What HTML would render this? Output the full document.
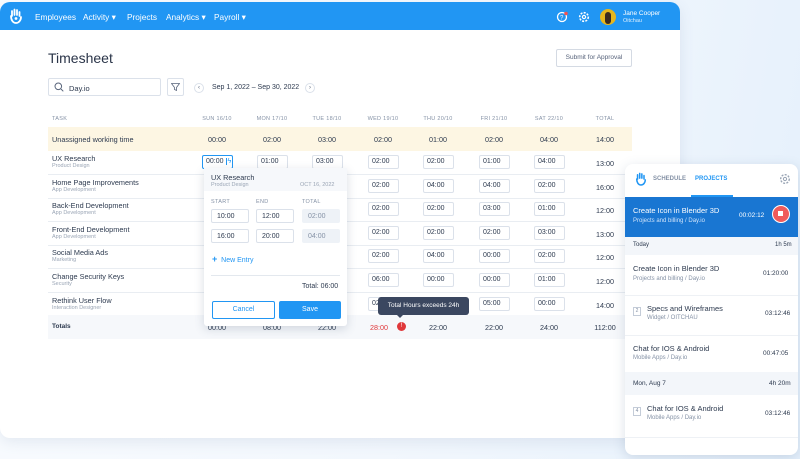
<!DOCTYPE html><html><head><style>
*{margin:0;padding:0;box-sizing:border-box}
body{width:800px;height:459px;overflow:hidden;position:relative;font-family:"Liberation Sans",sans-serif;background:linear-gradient(120deg,#fbfdff 0%,#f2f7fd 60%,#e6f1fc 100%);color:#2d3a4f}
.a{position:absolute}
.card{left:0;top:2px;width:680px;height:436px;background:#fff;border-radius:10px;box-shadow:0 4px 14px rgba(80,110,150,.12);overflow:hidden}
.nav{left:0;top:0;width:680px;height:28px;background:#2196f3;color:#fff;font-size:8.3px}
.nav span{position:absolute;top:10px}
.h{font-size:7px;color:#8592a6;letter-spacing:.3px}
.c{text-align:center;width:56px;margin-left:-28px;font-size:7.2px}
.inp{width:31px;height:14px;margin-left:-15px;border:1px solid #dbe1ea;border-radius:2px;font-size:7px;line-height:12px;padding-left:3px;background:#fff}
.line{left:48px;width:584px;height:1px;background:#e9edf2}
.t1{font-size:7.3px;color:#2d3a4f}.t2{font-size:5.5px;color:#9aa5b5}
.p .b{border:1px solid #dbe1ea;border-radius:2px;font-size:7px;padding:3px 5px;height:14px;line-height:7px}
.r .i{font-size:7.5px}.r .s{font-size:6px;color:#8592a6}
</style></head><body>
<div class="a" style="left:640px;top:0;width:200px;height:459px;background:linear-gradient(100deg,#eef5fd,#e3effb)"></div>
<div class="a card">
 <div class="a nav">
  <svg class="a" style="left:9px;top:6px" width="14" height="16" viewBox="0 0 14 16"><path d="M3 8V3M5.5 7V1.5M8 7V2M10.5 8V4M2 8c0 4 2 7 5 7s5-3 5-6" stroke="#fff" stroke-width="1.8" fill="none" stroke-linecap="round"/><circle cx="7" cy="10.5" r="1.4" fill="#fff"/></svg>
  <span style="left:35px">Employees</span><span style="left:83px">Activity ▾</span><span style="left:127px">Projects</span><span style="left:166px">Analytics ▾</span><span style="left:214px">Payroll ▾</span>
  <svg class="a" style="left:556px;top:9px" width="12" height="12"><circle cx="6" cy="6" r="4.5" stroke="#fff" stroke-width="1.3" fill="none"/><text x="4" y="8.5" font-size="6" fill="#fff">?</text><circle cx="10" cy="2.5" r="1.8" fill="#f05252"/></svg>
  <svg class="a" style="left:578px;top:9px" width="12" height="12"><circle cx="6" cy="6" r="4.3" stroke="#fff" stroke-width="1.6" stroke-dasharray="2 1.3" fill="none"/><circle cx="6" cy="6" r="1.6" stroke="#fff" stroke-width="1.2" fill="none"/></svg>
  <div class="a" style="left:600px;top:7px;width:16px;height:16px;border-radius:50%;background:#e7b61c"><div class="a" style="left:5px;top:3px;width:6px;height:12px;background:#3a2a20;border-radius:3px"></div></div>
  <span style="left:623px;top:8px;font-size:6.5px">Jane Cooper</span><span style="left:623px;top:16px;font-size:5.5px;opacity:.85">Oitchau</span>
 </div>
 <div class="a" style="left:48px;top:48px;font-size:14px;color:#2a3448">Timesheet</div>
 <div class="a" style="left:556px;top:47px;width:76px;height:18px;border:1px solid #d4dae3;border-radius:2px;font-size:6.5px;color:#56627a;text-align:center;line-height:16px">Submit for Approval</div>
 <div class="a" style="left:48px;top:76px;width:113px;height:18px;border:1px solid #dbe1ea;border-radius:2px;font-size:7.5px;padding:5px 0 0 20px">Day.io</div>
 <svg class="a" style="left:54px;top:80px" width="10" height="10"><circle cx="4.3" cy="4.3" r="3.3" stroke="#5a667c" fill="none"/><path d="M7 7l2.3 2.3" stroke="#5a667c"/></svg>
 <div class="a" style="left:167px;top:76px;width:17px;height:18px;border:1px solid #dbe1ea;border-radius:2px"></div>
 <svg class="a" style="left:171px;top:81px" width="9" height="8"><path d="M.5 .5h8L5.5 4.5v3l-2-1v-2z" stroke="#5a667c" fill="none" stroke-width=".8"/></svg>
 <div class="a" style="left:194px;top:81px;width:10px;height:10px;border:1px solid #dbe1ea;border-radius:50%;font-size:6px;text-align:center;line-height:8px;color:#5a667c">‹</div>
 <div class="a" style="left:212px;top:82px;font-size:7px">Sep 1, 2022 – Sep 30, 2022</div>
 <div class="a" style="left:305px;top:81px;width:10px;height:10px;border:1px solid #dbe1ea;border-radius:50%;font-size:6px;text-align:center;line-height:8px;color:#5a667c">›</div>
 <div class="a h" style="left:52px;top:114px;font-size:5.5px">TASK</div>
</div>
<div id="tb"></div>
<script>
var cols=[217,272,327,383,438,494,549,605],
hd=["SUN 16/10","MON 17/10","TUE 18/10","WED 19/10","THU 20/10","FRI 21/10","SAT 22/10","TOTAL"],
rows=[["UX Research","Product Design",["00:00","01:00","03:00","02:00","02:00","01:00","04:00","13:00"]],
["Home Page Improvements","App Development",["","","","02:00","04:00","04:00","02:00","16:00"]],
["Back-End Development","App Development",["","","","02:00","02:00","03:00","01:00","12:00"]],
["Front-End Development","App Development",["","","","02:00","02:00","02:00","03:00","13:00"]],
["Social Media Ads","Marketing",["","","","02:00","04:00","00:00","02:00","12:00"]],
["Change Security Keys","Security",["","","","06:00","00:00","00:00","01:00","12:00"]],
["Rethink User Flow","Interaction Designer",["","","","02:00","03:00","05:00","00:00","14:00"]]],
h='';
cols.forEach((x,i)=>h+=`<div class="a c h" style="left:${x}px;top:116px;font-size:5.5px">${hd[i]}</div>`);
h+=`<div class="a" style="left:48px;top:127px;width:584px;height:24px;background:#fdf6e3"></div><div class="a t1" style="left:52px;top:135px">Unassigned working time</div>`;
["00:00","02:00","03:00","02:00","01:00","02:00","04:00","14:00"].forEach((v,i)=>h+=`<div class="a c" style="left:${cols[i]}px;top:135px">${v}</div>`);
rows.forEach((r,k)=>{var y=151+k*23.6;
h+=`<div class="a line" style="top:${y+23}px"></div><div class="a t1" style="left:52px;top:${y+3}px">${r[0]}</div><div class="a t2" style="left:52px;top:${y+12}px">${r[1]}</div>`;
r[2].forEach((v,i)=>{if(!v)return;if(i==7)h+=`<div class="a c" style="left:${cols[i]}px;top:${y+8}px">${v}</div>`;else h+=`<div class="a inp" style="left:${cols[i]}px;top:${y+4}px;${k==0&&i==0?'border-color:#2196f3':''}">${v}${k==0&&i==0?'<span style="color:#2196f3;border-left:1px solid #2196f3;margin-left:2px;padding-left:1px">ϟ</span>':''}</div>`;});});
h+=`<div class="a" style="left:48px;top:315px;width:584px;height:24px;background:#f6f8fb"></div><div class="a t1" style="left:52px;top:323px;font-weight:bold;font-size:6.5px">Totals</div>`;
["00:00","08:00","22:00","28:00","22:00","22:00","24:00","112:00"].forEach((v,i)=>h+=`<div class="a c" style="left:${cols[i]}px;top:323px;${i==3?'color:#e0383b;margin-left:-32px':''}">${v}</div>`);
document.getElementById('tb').innerHTML=h;
</script>
<div class="a" style="left:397px;top:322px;width:9px;height:9px;border-radius:50%;background:#e0383b;color:#fff;font-size:6px;text-align:center;line-height:9px">!</div>
<div class="a" style="left:378px;top:297px;width:91px;height:18px;background:#3b4760;border-radius:3px;color:#fff;font-size:6.5px;text-align:center;line-height:18px">Total Hours exceeds 24h</div>
<div class="a" style="left:396px;top:314px;border:4px solid transparent;border-top-color:#3b4760"></div>
<div class="a p" style="left:204px;top:168px;width:143px;height:158px;background:#fff;border-radius:3px;box-shadow:0 3px 10px rgba(60,80,110,.2)">
 <div class="a" style="left:0;top:0;width:143px;height:23px;background:#f6f8fb"></div>
 <div class="a t1" style="left:7px;top:5px">UX Research</div><div class="a t2" style="left:7px;top:14px">Product Design</div><div class="a t2" style="left:96px;top:14px">OCT 16, 2022</div>
 <div class="a h" style="left:7px;top:31px;font-size:5.5px">START</div><div class="a h" style="left:52px;top:31px;font-size:5.5px">END</div><div class="a h" style="left:98px;top:31px;font-size:5.5px">TOTAL</div>
 <div class="a b" style="left:7px;top:41px;width:38px">10:00</div><div class="a b" style="left:52px;top:41px;width:38px">12:00</div><div class="a b" style="left:98px;top:41px;width:38px;background:#eef2f7;border-color:#eef2f7;color:#8592a6">02:00</div>
 <div class="a b" style="left:7px;top:61px;width:38px">16:00</div><div class="a b" style="left:52px;top:61px;width:38px">20:00</div><div class="a b" style="left:98px;top:61px;width:38px;background:#eef2f7;border-color:#eef2f7;color:#8592a6">04:00</div>
 <div class="a" style="left:8px;top:86px;font-size:7px;color:#2196f3"><b style="font-size:9px">+</b>&nbsp; New Entry</div>
 <div class="a" style="left:7px;top:107px;width:129px;height:1px;background:#e3e8ee"></div>
 <div class="a" style="left:98px;top:115px;font-size:7px">Total: 06:00</div>
 <div class="a" style="left:8px;top:133px;width:63px;height:18px;border:1px solid #2196f3;border-radius:2px;color:#2196f3;font-size:7px;text-align:center;line-height:16px">Cancel</div>
 <div class="a" style="left:75px;top:133px;width:62px;height:18px;background:#2196f3;border-radius:2px;color:#fff;font-size:7px;text-align:center;line-height:18px">Save</div>
</div>
<div class="a r" style="left:625px;top:164px;width:173px;height:291px;background:#fff;border-radius:8px;box-shadow:0 3px 12px rgba(60,90,130,.18);overflow:hidden">
 <svg class="a" style="left:10px;top:8px" width="12" height="14" viewBox="0 0 14 16"><path d="M3 8V3M5.5 7V1.5M8 7V2M10.5 8V4M2 8c0 4 2 7 5 7s5-3 5-6" stroke="#2196f3" stroke-width="1.8" fill="none" stroke-linecap="round"/></svg>
 <div class="a" style="left:28px;top:12px;font-size:6px;color:#8592a6;font-weight:bold">SCHEDULE</div>
 <div class="a" style="left:70px;top:12px;font-size:6px;color:#2196f3;font-weight:bold">PROJECTS</div>
 <div class="a" style="left:66px;top:31px;width:42px;height:2px;background:#2196f3"></div>
 <svg class="a" style="left:154px;top:9px" width="12" height="12"><circle cx="6" cy="6" r="4.3" stroke="#9aa5b5" stroke-width="1.4" stroke-dasharray="2 1.3" fill="none"/><circle cx="6" cy="6" r="1.6" stroke="#9aa5b5" fill="none"/></svg>
 <div class="a" style="left:0;top:33px;width:173px;height:40px;background:#1976d2"></div>
 <div class="a" style="left:8px;top:42px;font-size:7.5px;color:#fff">Create Icon in Blender 3D</div>
 <div class="a" style="left:8px;top:54px;font-size:6px;color:#cfe3fa">Projects and billing / Day.io</div>
 <div class="a" style="left:114px;top:48px;font-size:6.5px;color:#fff">00:02:12</div>
 <div class="a" style="left:147px;top:41px;width:18px;height:18px;border-radius:50%;background:#f05b5b;border:1.5px solid #fff"><div class="a" style="left:5px;top:5px;width:5px;height:5px;background:#fff"></div></div>
 <div class="a" style="left:0;top:73px;width:173px;height:18px;background:#f3f6fa"></div>
 <div class="a" style="left:8px;top:78px;font-size:6px">Today</div><div class="a" style="left:150px;top:78px;font-size:6px">1h 5m</div>
 <div class="a i" style="left:8px;top:100px">Create Icon in Blender 3D</div><div class="a s" style="left:8px;top:112px">Projects and billing / Day.io</div><div class="a" style="left:138px;top:106px;font-size:6.5px">01:20:00</div>
 <div class="a" style="left:0;top:131px;width:173px;height:1px;background:#eef1f5"></div>
 <div class="a" style="left:8px;top:143px;width:8px;height:9px;border:1px solid #c4ccd8;font-size:5px;text-align:center;line-height:7px;color:#8592a6">2</div>
 <div class="a i" style="left:22px;top:140px">Specs and Wireframes</div><div class="a s" style="left:22px;top:151px">Widget / OITCHAU</div><div class="a" style="left:140px;top:146px;font-size:6.5px">03:12:46</div>
 <div class="a" style="left:0;top:171px;width:173px;height:1px;background:#eef1f5"></div>
 <div class="a i" style="left:8px;top:180px">Chat for IOS &amp; Android</div><div class="a s" style="left:8px;top:191px">Mobile Apps / Day.io</div><div class="a" style="left:138px;top:186px;font-size:6.5px">00:47:05</div>
 <div class="a" style="left:0;top:208px;width:173px;height:23px;background:#f3f6fa"></div>
 <div class="a" style="left:8px;top:216px;font-size:6.5px">Mon, Aug 7</div><div class="a" style="left:144px;top:216px;font-size:6.5px">4h 20m</div>
 <div class="a" style="left:8px;top:243px;width:8px;height:9px;border:1px solid #c4ccd8;font-size:5px;text-align:center;line-height:7px;color:#8592a6">4</div>
 <div class="a i" style="left:22px;top:240px">Chat for IOS &amp; Android</div><div class="a s" style="left:22px;top:251px">Mobile Apps / Day.io</div><div class="a" style="left:140px;top:246px;font-size:6.5px">03:12:46</div>
 <div class="a" style="left:0;top:273px;width:173px;height:1px;background:#eef1f5"></div>
</div>
</body></html>
